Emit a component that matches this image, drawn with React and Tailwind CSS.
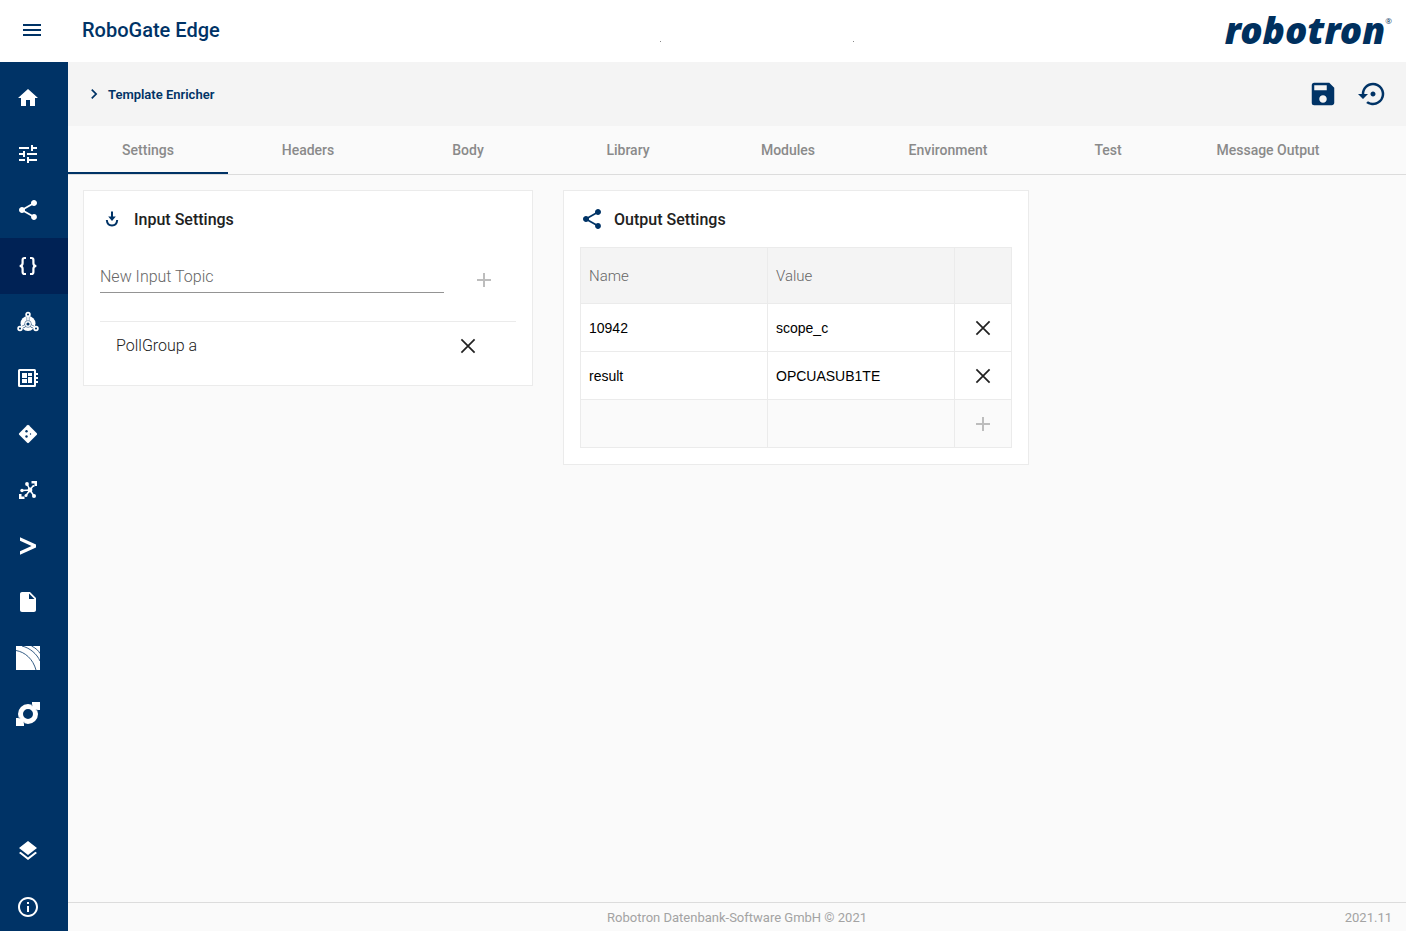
import { useState } from "react";
import {
  MdChevronRight,
  MdHome,
  MdInfoOutline,
  MdInsertDriveFile,
  MdLayers,
  MdMenu,
  MdSave,
  MdSettingsBackupRestore,
  MdShare,
  MdTune,
} from "react-icons/md";

function BracesIcon() {
  return (
    <svg viewBox="0 0 24 24" className="size-6" fill="none" stroke="currentColor" strokeWidth="2.2">
      <path d="M10 4H8.600C7.200 4 6.600 4.700 6.600 6v3.300c0 1.600-.8 2.600-2.900 2.700 2.100.1 2.900 1.100 2.900 2.700V18c0 1.300.6 2 2 2H10" />
      <path d="M14 4h1.400c1.400 0 2 .7 2 2v3.300c0 1.600.8 2.600 2.900 2.700-2.100.1-2.900 1.100-2.900 2.700V18c0 1.300-.6 2-2 2H14" />
    </svg>
  );
}

function HubIcon() {
  return (
    <svg viewBox="0 0 24 24" className="size-6">
      <circle cx="12" cy="13.500" r="7.500" fill="currentColor" />
      <path d="M12 5v8M12 14l-7.500 4.300M12 14l7.500 4.300" stroke="#003366" strokeWidth="2.600" />
      <path d="M12 5v8M12 14l-7.500 4.300M12 14l7.500 4.300" stroke="currentColor" strokeWidth="1.800" />
      <circle cx="12" cy="14" r="3.400" fill="currentColor" stroke="#003366" strokeWidth=".5" />
      <circle cx="12" cy="14" r="1.600" fill="#003366" />
      <g fill="#003366" stroke="currentColor" strokeWidth="1.700">
        <circle cx="12" cy="4.500" r="1.900" />
        <circle cx="4" cy="18.500" r="1.900" />
        <circle cx="20" cy="18.500" r="1.900" />
      </g>
    </svg>
  );
}

function BoardIcon() {
  return (
    <svg viewBox="0 0 24 24" className="size-6" fill="currentColor">
      <path
        fillRule="evenodd"
        d="M3.500 3h15A1.500 1.500 0 0 1 20 4.500V7h2v2h-2v2h2v2h-2v2h2v2h-2v2.500a1.500 1.500 0 0 1-1.500 1.500h-15A1.500 1.500 0 0 1 2 19.500v-15A1.500 1.500 0 0 1 3.500 3zM4 5v14h14V5z"
      />
      <path d="M6 7h5v5H6zM12 7h4v3h-4zM6 13h5v4H6zM12 11h4v6h-4z" />
    </svg>
  );
}

function DiamondIcon() {
  return (
    <svg viewBox="0 0 24 24" className="size-6" fill="currentColor">
      <path d="M11.200 3.200a1.200 1.200 0 0 1 1.600 0l8 8a1.200 1.200 0 0 1 0 1.600l-8 8a1.200 1.200 0 0 1-1.600 0l-8-8a1.200 1.200 0 0 1 0-1.600z" />
      <g fill="#003366">
        <circle cx="10.500" cy="9.300" r="1.200" />
        <circle cx="10.500" cy="14.500" r="1.200" />
        <circle cx="14.500" cy="12" r=".7" />
      </g>
    </svg>
  );
}

function NetworkIcon() {
  return (
    <svg viewBox="0 0 24 24" className="size-6" fill="currentColor">
      <path d="M15.500 3H21v5h-2.500V5.500h-3zM3 16h2.500v2.500h3V21H3z" />
      <path
        d="m14 12-3-6M14 12l3-4M14 12l4 6M14 12l-4 5.500M14 12l-8 .5"
        stroke="currentColor"
        strokeWidth="1.500"
      />
      <circle cx="14" cy="12" r="2.400" />
      <circle cx="11" cy="6" r="1.900" />
      <circle cx="6" cy="12.500" r="1.700" />
      <circle cx="10" cy="17.500" r="1.500" />
      <circle cx="18" cy="18" r="2" />
      <circle cx="17.500" cy="8" r="1.100" />
    </svg>
  );
}

function PromptIcon() {
  return (
    <svg viewBox="0 0 24 24" className="size-6" fill="currentColor">
      <path d="M4 3.200 20 10.500v3L4 20.800v-3.500L15.500 12 4 6.700z" />
    </svg>
  );
}

function ArcsIcon() {
  return (
    <svg viewBox="0 0 24 24" className="size-6">
      <path d="M0 0h24v24H0z" fill="currentColor" />
      <path d="M0 4.500C9 6 17 13 20 24M6 0c8 2 15 8 18 15M15.500 0c4 2 7 4.500 8.500 7.500" stroke="#003366" strokeWidth=".8" fill="none" />
    </svg>
  );
}

function RingIcon() {
  return (
    <svg viewBox="0 0 24 24" className="size-6">
      <path d="M16 0h8v8h-8zM0 16h8v8H0z" fill="currentColor" />
      <circle cx="12" cy="12" r="7.500" fill="none" stroke="currentColor" strokeWidth="5" />
      <path d="M16 2.500v1.700M19.800 8h1.700M2.500 16h1.700M8 19.800v1.700" stroke="#003366" strokeWidth=".5" />
    </svg>
  );
}

function InputIcon() {
  return (
    <svg viewBox="0 0 24 24" className="size-6" fill="none" stroke="#003366" strokeWidth="2">
      <path d="M12 4.500v8" />
      <path d="M8.200 9.500h7.600L12 14z" fill="#003366" stroke="none" />
      <path d="M6.800 13c.3 3.500 2.500 5.500 5.200 5.500s4.900-2 5.200-5.500" />
    </svg>
  );
}

function CloseIcon() {
  return (
    <svg viewBox="0 0 24 24" className="size-6" fill="none" stroke="currentColor" strokeWidth="1.700">
      <path d="m5.400 5.400 13.200 13.200M18.600 5.400 5.400 18.600" />
    </svg>
  );
}

function AddIcon() {
  return (
    <svg viewBox="0 0 24 24" className="size-6" fill="none" stroke="currentColor" strokeWidth="2">
      <path d="M12 5v14M5 12h14" />
    </svg>
  );
}

function Logo() {
  return (
    <div className="flex items-start whitespace-nowrap text-[#00305e]">
      <span className="font-['Noto_Sans','Open_Sans',sans-serif] text-[37px] leading-[58px] font-black italic">
        robotron
      </span>
      <span className="mt-3.5 font-['Open_Sans',sans-serif] text-[8px] leading-3">®</span>
    </div>
  );
}

const navItems = [
  { name: "Home", icon: <MdHome className="size-6" /> },
  { name: "Configuration", icon: <MdTune className="size-6" /> },
  { name: "Topics", icon: <MdShare className="size-6" /> },
  { name: "Templates", icon: <BracesIcon />, active: true },
  { name: "Hub", icon: <HubIcon /> },
  { name: "Devices", icon: <BoardIcon /> },
  { name: "Rules", icon: <DiamondIcon /> },
  { name: "Network", icon: <NetworkIcon /> },
  { name: "Console", icon: <PromptIcon /> },
  { name: "Files", icon: <MdInsertDriveFile className="size-6" /> },
  { name: "Streams", icon: <ArcsIcon /> },
  { name: "Connections", icon: <RingIcon /> },
];

const bottomItems = [
  { name: "Layers", icon: <MdLayers className="size-6" /> },
  { name: "Info", icon: <MdInfoOutline className="size-6" /> },
];

const tabs = ["Settings", "Headers", "Body", "Library", "Modules", "Environment", "Test", "Message Output"];

function NavItem({ name, icon, active = false }) {
  return (
    <a
      href="#"
      aria-label={name}
      className={`flex h-14 items-center pl-4 text-white ${active ? "bg-[#002255]" : ""}`}
    >
      {icon}
    </a>
  );
}

function IconButton({ label, children, className = "" }) {
  return (
    <button type="button" aria-label={label} className={`flex items-center justify-center ${className}`}>
      {children}
    </button>
  );
}

function InputSettings() {
  const [topic, setTopic] = useState("");

  return (
    <section className="w-[450px] border border-[#ebebeb] bg-white p-4">
      <h2 className="flex h-6 items-center gap-[10px] text-base font-medium text-[#212121]">
        <InputIcon />
        <span className="pt-0.5">Input Settings</span>
      </h2>
      <div className="mt-7 flex items-start">
        <input
          type="text"
          aria-label="New Input Topic"
          placeholder="New Input Topic"
          value={topic}
          onChange={(e) => setTopic(e.target.value)}
          className="h-[34px] min-w-0 flex-1 border-b border-[#949494] pt-0.5 text-base font-light outline-none placeholder:text-[#666666]"
        />
        <IconButton label="Add topic" className="mr-3 ml-5 h-[42px] w-10 text-[#bdbdbd]">
          <AddIcon />
        </IconButton>
      </div>
      <ul className="mt-5 border-t border-[#ebebeb]">
        <li className="flex h-[47px] items-center justify-between pr-9 pl-4 text-base font-light text-[#212121]">
          PollGroup a
          <IconButton label="Remove PollGroup a">
            <CloseIcon />
          </IconButton>
        </li>
      </ul>
    </section>
  );
}

function OutputSettings() {
  const [rows, setRows] = useState([
    { name: "10942", value: "scope_c" },
    { name: "result", value: "OPCUASUB1TE" },
  ]);

  const update = (index, key, value) => {
    setRows(rows.map((row, i) => (i === index ? { ...row, [key]: value } : row)));
  };

  return (
    <section className="w-[466px] border border-[#ebebeb] bg-white p-4">
      <h2 className="flex h-6 items-center gap-[10px] text-base font-medium text-[#212121]">
        <MdShare className="size-6 text-[#003366]" />
        <span className="pt-0.5">Output Settings</span>
      </h2>
      <table className="mt-4 w-full table-fixed border-collapse font-['Liberation_Sans',sans-serif] text-sm text-black">
        <thead>
          <tr className="h-14 bg-[#f4f4f4] text-left font-['Roboto',sans-serif] text-[15px] text-[#666666]">
            <th className="border border-[#ebebeb] px-2 pt-0.5 font-light">Name</th>
            <th className="border border-[#ebebeb] px-2 pt-0.5 font-light">Value</th>
            <th className="w-[57px] border border-[#ebebeb]" aria-label="Actions" />
          </tr>
        </thead>
        <tbody>
          {rows.map((row, i) => (
            <tr key={i} className="h-12">
              <td className="border border-[#ebebeb] px-2">
                <input
                  aria-label="Name"
                  value={row.name}
                  onChange={(e) => update(i, "name", e.target.value)}
                  className="w-full outline-none"
                />
              </td>
              <td className="border border-[#ebebeb] px-2">
                <input
                  aria-label="Value"
                  value={row.value}
                  onChange={(e) => update(i, "value", e.target.value)}
                  className="w-full outline-none"
                />
              </td>
              <td className="border border-[#ebebeb] text-[#212121]">
                <IconButton label="Remove row" className="w-full">
                  <CloseIcon />
                </IconButton>
              </td>
            </tr>
          ))}
          <tr className="h-12 bg-[#fafafa]">
            <td className="border border-[#ebebeb]" />
            <td className="border border-[#ebebeb]" />
            <td className="border border-[#ebebeb] text-[#bdbdbd]">
              <IconButton label="Add row" className="w-full">
                <AddIcon />
              </IconButton>
            </td>
          </tr>
        </tbody>
      </table>
    </section>
  );
}

function App() {
  const [activeTab, setActiveTab] = useState("Settings");

  return (
    <div className="flex min-h-screen flex-col bg-[#fafafa] font-['Roboto',sans-serif]">
      <header className="flex h-[62px] items-center bg-white pr-[14px] pb-0.5 pl-5 text-[#003366]">
        <IconButton label="Menu">
          <MdMenu className="size-6" />
        </IconButton>
        <h1 className="ml-[38px] text-xl font-medium">RoboGate Edge</h1>
        <div className="flex flex-1 justify-center gap-48 pt-[22px] pl-[70px]">
          <span className="size-px bg-[#888888]" />
          <span className="size-px bg-[#888888]" />
        </div>
        <Logo />
      </header>

      <div className="flex flex-1">
        <nav className="flex w-17 flex-col justify-between bg-[#003366] pt-2">
          <div>
            {navItems.map((item) => (
              <NavItem key={item.name} {...item} />
            ))}
          </div>
          <div className="-mb-1">
            {bottomItems.map((item) => (
              <NavItem key={item.name} {...item} />
            ))}
          </div>
        </nav>

        <div className="flex min-w-0 flex-1 flex-col">
          <div className="flex h-16 items-center justify-between bg-[#f4f4f4] pr-[18px] pl-4 text-[#003366]">
            <div className="flex items-center gap-1 text-[13px] font-semibold">
              <MdChevronRight className="size-5" />
              <span className="pt-0.5">Template Enricher</span>
            </div>
            <div className="flex gap-5">
              <IconButton label="Save">
                <MdSave className="size-[30px]" />
              </IconButton>
              <IconButton label="Restore">
                <MdSettingsBackupRestore className="size-[30px]" />
              </IconButton>
            </div>
          </div>

          <div className="flex border-b border-[#dcdcdc]" role="tablist">
            {tabs.map((tab) => (
              <button
                key={tab}
                type="button"
                role="tab"
                aria-selected={tab === activeTab}
                onClick={() => setActiveTab(tab)}
                className={`h-12 w-40 border-b-2 pt-0.5 text-sm font-medium text-[#8a8a8a] ${
                  tab === activeTab ? "border-[#003366]" : "border-transparent"
                }`}
              >
                {tab}
              </button>
            ))}
          </div>

          <main className="flex flex-1 flex-wrap items-start gap-[30px] p-[15px]">
            <InputSettings />
            <OutputSettings />
          </main>

          <footer className="flex h-[29px] items-center border-t border-[#dcdcdc] px-[14px] pt-0.5 text-[13px] text-[#a3a3a3]">
            <span className="flex-1" />
            <span>Robotron Datenbank-Software GmbH © 2021</span>
            <span className="flex-1 text-right">2021.11</span>
          </footer>
        </div>
      </div>
    </div>
  );
}

export default App;
